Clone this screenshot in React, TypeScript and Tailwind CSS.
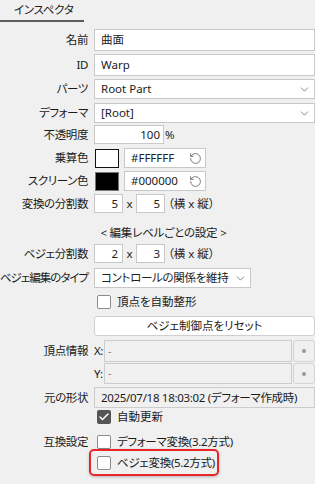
import React from "react";
import { ChevronDown, RotateCcw, Check } from "lucide-react";

const font = "[font-family:'Noto_Sans','Noto_Sans_CJK_JP',sans-serif] [font-feature-settings:'palt'] whitespace-nowrap";

function Row({ label, mt, h, children, tight }: { label?: string; mt: string; h: string; children?: React.ReactNode; tight?: boolean }) {
  return (
    <div className={`flex items-stretch ${mt} ${h}`}>
      <div className={`w-[88px] shrink-0 flex items-center justify-end text-[11.5px] text-[#1a1a1a] whitespace-nowrap ${tight ? "tracking-[-1px]" : "tracking-[-0.4px]"}`}>{label}</div>
      <div className="ml-[6px] flex-1 flex items-stretch min-w-0">{children}</div>
    </div>
  );
}

function Box({ children, className = "" }: { children?: React.ReactNode; className?: string }) {
  return (
    <div className={`bg-white border border-[#c8c8c8] flex items-center px-[6px] text-[11.5px] text-[#222] ${className}`}>{children}</div>
  );
}

function CheckBox({ checked }: { checked?: boolean }) {
  if (checked)
    return (
      <div className="w-[14px] h-[14px] rounded-[2px] bg-[#555555] flex items-center justify-center shrink-0">
        <Check size={12} strokeWidth={3} color="#ffffff" />
      </div>
    );
  return <div className="w-[14px] h-[14px] rounded-[2px] bg-white border border-[#8c8c8c] shrink-0" />;
}

export default function App() {
  return (
    <div className={`w-[315px] h-[484px] bg-[#f0f0f0] overflow-hidden flex flex-col ${font}`}>
      <div className="flex h-[22px] shrink-0">
        <div className="w-[84px] h-[22px] border-b-2 border-[#5e5e5e] pl-[14px] text-[11.5px] tracking-[-0.3px] text-[#1a1a1a] leading-[20px]">インスペクタ</div>
      </div>

      <Row label="名前" mt="mt-[7px]" h="h-[22px]">
        <Box className="flex-1">曲面</Box>
      </Row>
      <Row label="ID" mt="mt-[3px]" h="h-[22px]">
        <Box className="flex-1">Warp</Box>
      </Row>
      <Row label="パーツ" mt="mt-[3px]" h="h-[20px]">
        <Box className="flex-1 justify-between pr-[3px]">
          <span>Root Part</span>
          <ChevronDown size={13} strokeWidth={1.3} color="#555" />
        </Box>
      </Row>
      <Row label="デフォーマ" mt="mt-[4px]" h="h-[20px]">
        <Box className="flex-1 justify-between pr-[3px]">
          <span>[Root]</span>
          <ChevronDown size={13} strokeWidth={1.3} color="#555" />
        </Box>
      </Row>
      <Row label="不透明度" mt="mt-[2px]" h="h-[19px]">
        <Box className="w-[70px] justify-end pr-[3px]">100</Box>
        <span className="ml-[1px] flex items-center text-[11.5px] text-[#222]">%</span>
      </Row>
      <Row label="乗算色" mt="mt-[4px]" h="h-[20px]">
        <div className="w-[24px] h-[19px] mt-[1px] ml-[1px] bg-white border border-[#111]" />
        <Box className="ml-[5px] w-[82px] justify-between pr-[3px]">
          <span>#FFFFFF</span>
          <RotateCcw size={13} strokeWidth={1.4} color="#555" />
        </Box>
      </Row>
      <Row label="スクリーン色" mt="mt-[3px]" h="h-[20px]">
        <div className="w-[24px] h-[19px] mt-[1px] ml-[1px] bg-black border border-[#777]" />
        <Box className="ml-[5px] w-[82px] justify-between pr-[3px]">
          <span>#000000</span>
          <RotateCcw size={13} strokeWidth={1.4} color="#555" />
        </Box>
      </Row>
      <Row label="変換の分割数" mt="mt-[3px]" h="h-[19px]">
        <Box className="w-[29px] justify-end pr-[4px]">5</Box>
        <span className="w-[13px] flex items-center justify-center text-[11.5px] text-[#222]">x</span>
        <Box className="w-[29px] justify-end pr-[4px]">5</Box>
        <span className="ml-[3px] flex items-center text-[11.5px] text-[#222]">（横 x 縦）</span>
      </Row>

      <div className="mt-[12px] h-[16px] flex items-center justify-center pl-[12px] text-[11.5px] tracking-[-0.2px] text-[#1a1a1a]">&lt; 編集レベルごとの設定 &gt;</div>

      <Row label="ベジェ分割数" mt="mt-[3px]" h="h-[19px]">
        <Box className="w-[29px] justify-end pr-[4px]">2</Box>
        <span className="w-[13px] flex items-center justify-center text-[11.5px] text-[#222]">x</span>
        <Box className="w-[29px] justify-end pr-[4px]">3</Box>
        <span className="ml-[3px] flex items-center text-[11.5px] text-[#222]">（横 x 縦）</span>
      </Row>
      <Row label="ベジェ編集のタイプ" tight mt="mt-[5px]" h="h-[20px]">
        <Box className="w-[157px] justify-between pr-[3px] tracking-[-0.3px]">
          <span>コントロールの関係を維持</span>
          <ChevronDown size={13} strokeWidth={1.3} color="#555" />
        </Box>
      </Row>
      <Row mt="mt-[6px]" h="h-[16px]">
        <div className="flex items-center pl-[3px] gap-[6px] text-[11.5px] text-[#1a1a1a]">
          <CheckBox />
          <span>頂点を自動整形</span>
        </div>
      </Row>
      <Row mt="mt-[6px]" h="h-[20px]">
        <div className="flex-1 bg-white border border-[#cfcfcf] rounded-[3px] flex items-center justify-center text-[11.5px] text-[#1a1a1a]">ベジェ制御点をリセット</div>
      </Row>
      <Row label="頂点情報" mt="mt-[4px]" h="h-[22px]">
        <span className="w-[10px] flex items-center text-[11.5px] tracking-[-0.5px] text-[#1a1a1a]">X:</span>
        <div className="flex-1 bg-[#f0f0f0] border border-[#cccccc] flex items-center pl-[3px] text-[11px] text-[#888]">-</div>
        <div className="w-[22px] ml-[1px] bg-[#f0f0f0] border border-[#d4d4d4] rounded-[3px] flex items-center justify-center">
          <div className="w-[4px] h-[4px] rounded-full bg-[#9a9a9a]" />
        </div>
      </Row>
      <Row mt="mt-[1px]" h="h-[21px]">
        <span className="w-[10px] flex items-center text-[11.5px] tracking-[-0.5px] text-[#1a1a1a]">Y:</span>
        <div className="flex-1 bg-[#f0f0f0] border border-[#cccccc] flex items-center pl-[3px] text-[11px] text-[#888]">-</div>
        <div className="w-[22px] ml-[1px] bg-[#f0f0f0] border border-[#d4d4d4] rounded-[3px] flex items-center justify-center">
          <div className="w-[4px] h-[4px] rounded-full bg-[#9a9a9a]" />
        </div>
      </Row>
      <Row label="元の形状" mt="mt-[3px]" h="h-[21px]">
        <div className="flex-1 bg-[#f0f0f0] border border-[#cccccc] flex items-center pl-[6px] text-[11.5px] tracking-[-0.3px] text-[#1a1a1a] whitespace-nowrap">2025/07/18 18:03:02 (デフォーマ作成時)</div>
      </Row>
      <Row mt="mt-[1px]" h="h-[16px]">
        <div className="flex items-center pl-[3px] gap-[6px] text-[11.5px] text-[#1a1a1a]">
          <CheckBox checked />
          <span>自動更新</span>
        </div>
      </Row>
      <Row label="互換設定" mt="mt-[10px]" h="h-[14px]">
        <div className="flex items-center pl-[3px] gap-[6px] text-[11.5px] tracking-[-0.3px] text-[#1a1a1a]">
          <CheckBox />
          <span>デフォーマ変換(3.2方式)</span>
        </div>
      </Row>
      <div className="ml-[89px] mt-[0px] w-[130px] h-[27px] border-2 border-[#e8262a] rounded-[5px] shadow-[0_1px_3px_rgba(0,0,0,0.25)] flex items-center pl-[6px] gap-[6px] text-[11.5px] tracking-[-0.3px] text-[#1a1a1a]">
        <CheckBox />
        <span>ベジェ変換(5.2方式)</span>
      </div>
    </div>
  );
}
